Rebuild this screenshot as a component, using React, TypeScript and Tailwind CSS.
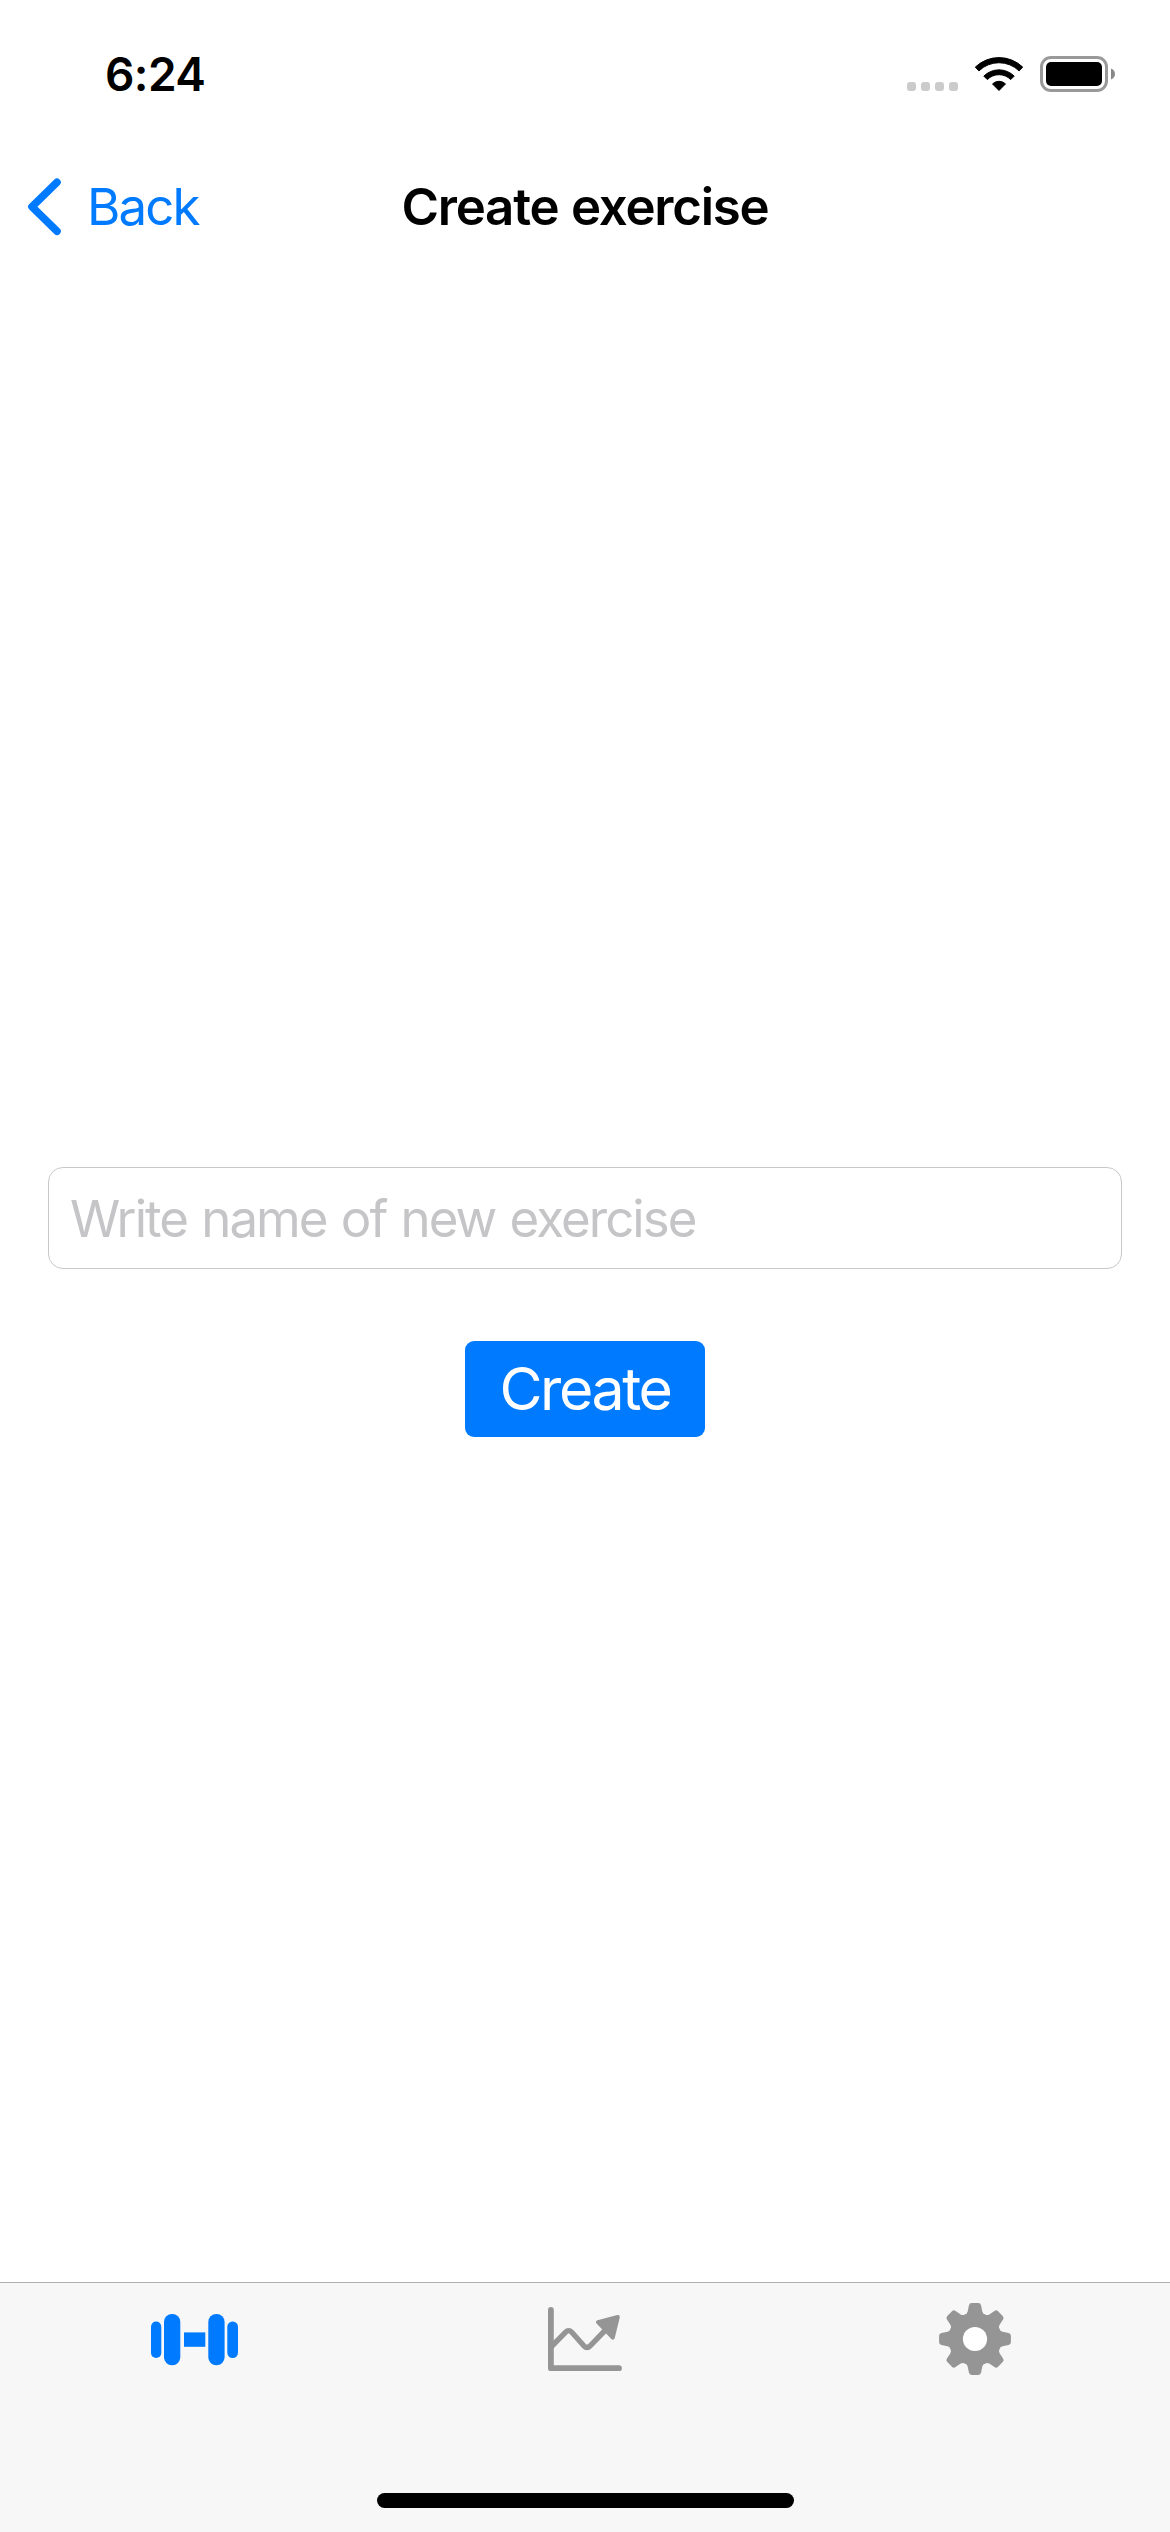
const TEETH = [0, 45, 90, 135, 180, 225, 270, 315];

function StatusBar() {
  return (
    <div className="flex h-[141px] items-start justify-between pl-[105px] pr-[55px] pt-[44px]">
      <span className="text-[46px] font-semibold leading-[60px] tracking-[-0.6px]">6:24</span>
      <div className="flex h-[60px] items-start pt-[11px]">
        <div className="mt-[27px] flex gap-[5px]">
          <span className="size-[9px] rounded-[3px] bg-[#cbcbcb]" />
          <span className="size-[9px] rounded-[3px] bg-[#cbcbcb]" />
          <span className="size-[9px] rounded-[3px] bg-[#cbcbcb]" />
          <span className="size-[9px] rounded-[3px] bg-[#cbcbcb]" />
        </div>
        <svg className="ml-[16px]" width="50" height="37" viewBox="0 0 50 37">
          <g stroke="#000" strokeWidth="1" strokeLinejoin="round">
            <path d="M25 35.5 L18.5 28.9 A9.4 9.4 0 0 1 31.5 28.9 Z" />
            <path d="M13.3 24.6 L9.8 21.1 A21.6 21.6 0 0 1 40.2 21.1 L36.7 24.6 A16.4 16.4 0 0 0 13.3 24.6 Z" />
            <path d="M4.9 15.9 L1.3 12.1 A34.3 34.3 0 0 1 48.7 12.1 L45.1 15.9 A28.8 28.8 0 0 0 4.9 15.9 Z" />
          </g>
        </svg>
        <svg className="ml-[16px] mt-[1px]" width="75" height="36" viewBox="0 0 75 36">
          <rect x="1.5" y="1.5" width="65" height="33" rx="9.5" fill="none" stroke="#999" strokeWidth="3" />
          <rect x="6" y="6" width="56" height="24" rx="5" />
          <path d="M71 12.5 C76.3 14.5 76.3 21.5 71 23.5 Z" fill="#888" />
        </svg>
      </div>
    </div>
  );
}

function NavBar() {
  return (
    <header className="grid h-[132px] grid-cols-3 items-start">
      <button className="flex items-center pl-[27px] pt-[37px] text-left text-[#007aff]">
        <svg width="36" height="58" viewBox="0 0 36 58" fill="none" stroke="currentColor" strokeWidth="7.6" strokeLinecap="round" strokeLinejoin="round">
          <path d="M30 4.3 L5 28.8 L30 53.3" />
        </svg>
        <span className="ml-[24px] text-[51px] leading-[58px] tracking-[-1.9px]">Back</span>
      </button>
      <h1 className="whitespace-nowrap pt-[37px] text-center text-[51px] font-semibold leading-[58px] tracking-[-1.25px] [word-spacing:1px]">
        Create exercise
      </h1>
    </header>
  );
}

function DumbbellIcon() {
  return (
    <svg width="88" height="52" viewBox="0 0 88 52" fill="#007aff">
      <rect x="0" y="7.6" width="10.3" height="36.4" rx="5.1" />
      <rect x="13" y="0" width="16.3" height="51.3" rx="8" />
      <rect x="33" y="18.4" width="21.3" height="14.4" />
      <rect x="57.3" y="0" width="16.3" height="51.3" rx="8" />
      <rect x="76.3" y="7.6" width="10.7" height="36.4" rx="5.2" />
    </svg>
  );
}

function ChartIcon() {
  return (
    <svg width="76" height="66" viewBox="0 0 76 66" fill="none" stroke="#959595" strokeLinecap="round" strokeLinejoin="round">
      <path d="M3.9 3 V61.2 H72" strokeWidth="5.8" />
      <path d="M5 39 L18.4 25.3 Q21.6 22 24.8 25.3 L36.8 38.8 Q40 42 43.2 38.8 L58.5 23" strokeWidth="5.4" />
      <path d="M70.8 10 L51 15.2 L65.8 30.6 Z" fill="#959595" strokeWidth="4" />
    </svg>
  );
}

function GearIcon() {
  return (
    <svg width="72" height="72" viewBox="-36 -36 72 72" fill="#959595">
      <circle r="26.2" />
      {TEETH.map((angle) => (
        <path
          key={angle}
          transform={`rotate(${angle})`}
          d="M-10.3 -24.4 Q-7.9 -25 -7.3 -27.5 L-6.1 -33.6 Q-5.6 -35.9 -3.3 -35.9 H3.3 Q5.6 -35.9 6.1 -33.6 L7.3 -27.5 Q7.9 -25 10.3 -24.4 L0 -10 Z"
        />
      ))}
      <circle r="12.1" fill="#fff" />
    </svg>
  );
}

function TabBar() {
  return (
    <footer className="flex h-[250px] flex-col items-center justify-between border-t border-[#b0b0b0] bg-[#f7f7f7] pb-[24px]">
      <nav className="grid h-[112px] w-full grid-cols-3 place-items-center">
        <button className="pt-[2px]"><DumbbellIcon /></button>
        <button className="pt-[2px]"><ChartIcon /></button>
        <button><GearIcon /></button>
      </nav>
      <div className="h-[15px] w-[417px] rounded-full bg-black" />
    </footer>
  );
}

export default function App() {
  return (
    <div className="flex h-[2532px] w-[1170px] flex-col bg-white font-['Inter',sans-serif] text-black">
      <StatusBar />
      <NavBar />
      <main className="flex flex-1 flex-col items-center px-[48px] pt-[894px]">
        <input
          className="h-[102px] w-full rounded-[15px] border border-[#c8c8ca] bg-white px-[21px] text-[51px] tracking-[-1.95px] outline-none [word-spacing:1.8px] placeholder:text-[#c5c5c7]"
          placeholder="Write name of new exercise"
        />
        <button className="mt-[72px] h-[96px] w-[240px] rounded-[9px] bg-[#007aff] text-[59px] leading-[96px] tracking-[-2.4px] text-white">
          Create
        </button>
      </main>
      <TabBar />
    </div>
  );
}
